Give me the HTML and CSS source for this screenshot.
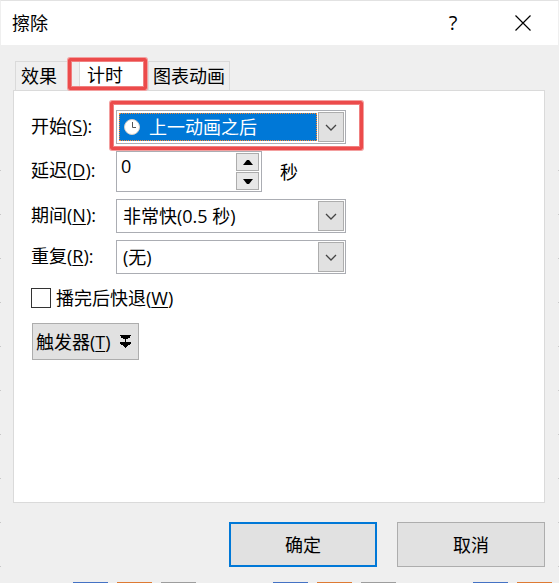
FILE: index.html
```html
<!DOCTYPE html>
<html lang="zh-CN">
<head>
  <meta charset="UTF-8">
  <meta name="viewport" content="width=device-width, initial-scale=1.0">
  <title>擦除</title>
  <link rel="stylesheet" href="styles.css">
</head>
<body>
  <main class="dialog">
    <header class="titlebar">
      <h1>擦除</h1>
      <button type="button" class="title-btn help" aria-label="帮助">?</button>
      <button type="button" class="title-btn" aria-label="关闭">
        <svg width="16" height="16" viewBox="0 0 16 16"><path d="M.5 .5l15 15M15.5 .5l-15 15" stroke="#000" stroke-width="1.2" fill="none"/></svg>
      </button>
    </header>

    <form class="content">
      <nav class="tabs" role="tablist">
        <button type="button" class="tab" role="tab">效果</button>
        <button type="button" class="tab active marked" role="tab" aria-selected="true">计时</button>
        <button type="button" class="tab" role="tab">图表动画</button>
      </nav>

      <section class="panel">
        <div class="fields">
          <label for="start">开始(<u>S</u>):</label>
          <div class="combo focused marked">
            <svg class="clock" width="16" height="16" viewBox="0 0 16 16"><circle cx="8" cy="8" r="7.5" fill="#fff" stroke="#d8d0c8"/><path d="M8.5 3v5.5h3.5" stroke="#555" fill="none"/></svg>
            <select id="start">
              <option>上一动画之后</option>
            </select>
            <span class="arrow"><svg width="12" height="7" viewBox="0 0 12 7"><path d="M1 1l5 5 5-5" stroke="#444" stroke-width="1.3" fill="none"/></svg></span>
          </div>

          <label for="delay">延迟(<u>D</u>):</label>
          <div class="delay">
            <div class="spinner">
              <input type="text" id="delay" value="0">
              <div class="steps">
                <button type="button" aria-label="增加"><svg width="10" height="5" viewBox="0 0 10 5"><path d="M0 5l4-5h2l4 5z"/></svg></button>
                <button type="button" aria-label="减少"><svg width="10" height="5" viewBox="0 0 10 5"><path d="M0 0l4 5h2l4-5z"/></svg></button>
              </div>
            </div>
            <span>秒</span>
          </div>

          <label for="duration">期间(<u>N</u>):</label>
          <div class="combo">
            <select id="duration">
              <option>非常快(0.5 秒)</option>
            </select>
            <span class="arrow"><svg width="12" height="7" viewBox="0 0 12 7"><path d="M1 1l5 5 5-5" stroke="#444" stroke-width="1.3" fill="none"/></svg></span>
          </div>

          <label for="repeat">重复(<u>R</u>):</label>
          <div class="combo">
            <select id="repeat">
              <option>(无)</option>
            </select>
            <span class="arrow"><svg width="12" height="7" viewBox="0 0 12 7"><path d="M1 1l5 5 5-5" stroke="#444" stroke-width="1.3" fill="none"/></svg></span>
          </div>
        </div>

        <div class="check">
          <input type="checkbox" id="rewind">
          <label for="rewind">播完后快退(<u>W</u>)</label>
        </div>

        <button type="button" class="trigger">
          <span>触发器(<u>T</u>)</span>
          <svg width="11" height="13" viewBox="0 0 11 13" shape-rendering="crispEdges"><path d="M0 0h11v1H0zM1 1h9v1H1zM1 2h9v1H1zM3 3h5v1H3zM5 4h1v3H5zM0 7h11v1H0zM0 8h11v1H0zM1 9h9v1H1zM3 10h5v1H3zM4 11h3v1H4zM5 12h1v1H5z"/></svg>
        </button>
      </section>

      <footer class="actions">
        <button type="submit" class="btn primary">确定</button>
        <button type="button" class="btn">取消</button>
      </footer>
    </form>

    <!-- chart bars showing under the dialog -->
    <div class="bars">
      <div class="group"><i></i><i></i><i></i></div>
      <div class="group"><i></i><i></i><i></i></div>
      <div class="group"><i></i><i></i></div>
    </div>
  </main>
</body>
</html>
```
FILE: styles.css
```css
* {
  box-sizing: border-box;
}

body {
  margin: 0;
  background-color: #efefef;
  color: #000;
}

body,
button,
input,
select {
  font-family: "Open Sans", "Noto Sans CJK SC", sans-serif;
  font-size: 18px;
  line-height: 24px;
}

button {
  padding: 0;
  color: #000;
}

svg {
  display: block;
}

u {
  text-underline-offset: 2px;
  text-decoration-thickness: 1px;
}

/* the gradients draw the gridline ends of the chart at both edges */
.dialog {
  display: flex;
  flex-direction: column;
  min-height: 100vh;
  overflow: hidden;
  background-image:
    repeating-linear-gradient(#c8c8c8 0 1px, transparent 1px 44px),
    repeating-linear-gradient(#c8c8c8 0 1px, transparent 1px 44px);
  background-repeat: no-repeat;
  background-size: 1px 100%;
  background-position: left 0 top 170px, right 0 top 170px;
}

.titlebar {
  display: flex;
  align-items: center;
  height: 45px;
  padding: 0 0 1px 11px;
  border-top: 1px solid #e2e2e2;
  border-left: 1px solid #efefef;
  border-right: 1px solid #efefef;
  background-color: #fff;
}

.titlebar h1 {
  flex: 1;
  margin: 0;
  font-size: 18px;
  font-weight: normal;
}

.title-btn {
  display: flex;
  align-items: center;
  justify-content: center;
  width: 70px;
  height: 42px;
  border: none;
  background: none;
}

.title-btn.help {
  font-size: 20px;
}

.content {
  flex: 1;
  display: flex;
  flex-direction: column;
  padding: 15px 14px 15px 13px;
}

.tabs {
  display: flex;
  height: 30px;
  padding-left: 2px;
}

.tab {
  padding: 0 4px;
  margin-top: 1px;
  border: 1px solid #dadada;
  border-width: 1px 1px 0 1px;
  background-color: #efefef;
}

.tab:first-child {
  padding: 0 22px 0 5px;
  border-right: none;
}

.tab.active {
  position: relative;
  padding: 0 24px 2px 7px;
  margin: 0;
  background-color: #fff;
}

/* red frame around the highlighted controls */
.marked::after {
  content: "";
  position: absolute;
  inset: -10px -18px -7px -7px;
  border: 3px solid #ec4b4b;
  border-radius: 2px;
  box-shadow: 0 0 0 1px #f3a0a0, inset 0 0 0 1px #f08080;
  pointer-events: none;
}

.tab.marked::after {
  inset: -3px 0 0 -12px;
}

.panel {
  flex: 1;
  padding: 19px 17px;
  border: 1px solid #dadada;
  background-color: #fff;
}

.fields {
  display: grid;
  grid-template-columns: 85px 1fr;
  row-gap: 7px;
  align-items: center;
}

.fields > label {
  padding-bottom: 3px;
}

.combo {
  position: relative;
  display: flex;
  width: 230px;
  height: 34px;
  padding: 1px;
  border: 1px solid #abadb3;
  background-color: #fff;
}

.combo select {
  flex: 1;
  min-width: 0;
  margin: 1px;
  padding: 0 4px;
  border: none;
  border-radius: 0;
  outline: none;
  appearance: none;
  background-color: #fff;
  color: #000;
}

.combo.focused select {
  padding-left: 29px;
  border: 1px dotted #ff8728;
  background-color: #0078d7;
  color: #fff;
}

.clock {
  position: absolute;
  top: 8px;
  left: 7px;
}

.arrow {
  display: flex;
  align-items: center;
  justify-content: center;
  width: 26px;
  border: 1px solid #adadad;
  background-color: #e1e1e1;
  pointer-events: none;
}

.delay {
  display: flex;
  align-items: center;
  gap: 18px;
}

.spinner {
  display: flex;
  width: 146px;
  height: 41px;
  border: 1px solid #abadb3;
}

.spinner input {
  flex: 1;
  min-width: 0;
  padding: 0 4px 12px;
  border: none;
  outline: none;
}

.steps {
  display: flex;
  flex-direction: column;
  gap: 1px;
  padding: 1px 2px 1px 0;
}

.steps button {
  flex: 1;
  display: flex;
  align-items: center;
  justify-content: center;
  width: 23px;
  border: 1px solid #adadad;
  background-color: #e8e8e8;
}

.check {
  display: flex;
  align-items: center;
  gap: 5px;
  margin-top: 12px;
}

.check input {
  appearance: none;
  width: 20px;
  height: 20px;
  margin: 0;
  border: 1px solid #333;
  background-color: #fff;
}

.trigger {
  display: flex;
  align-items: center;
  gap: 9px;
  height: 37px;
  margin: 13px 0 0 1px;
  padding: 0 7px 0 3px;
  border: 1px solid #adadad;
  background-color: #e1e1e1;
}

.actions {
  display: flex;
  justify-content: flex-end;
  gap: 20px;
  padding-top: 19px;
}

.btn {
  width: 148px;
  height: 45px;
  border: 1px solid #adadad;
  background-color: #e1e1e1;
}

.btn.primary {
  border: 2px solid #0078d7;
}

.bars {
  display: flex;
  gap: 77px;
  padding-left: 73px;
}

.group {
  display: flex;
  gap: 9px;
}

.group i {
  width: 35px;
  height: 1px;
  background-color: #4472c4;
}

.group i:nth-child(2) {
  background-color: #de7a33;
}

.group i:nth-child(3) {
  background-color: #9d9d9d;
}
```
